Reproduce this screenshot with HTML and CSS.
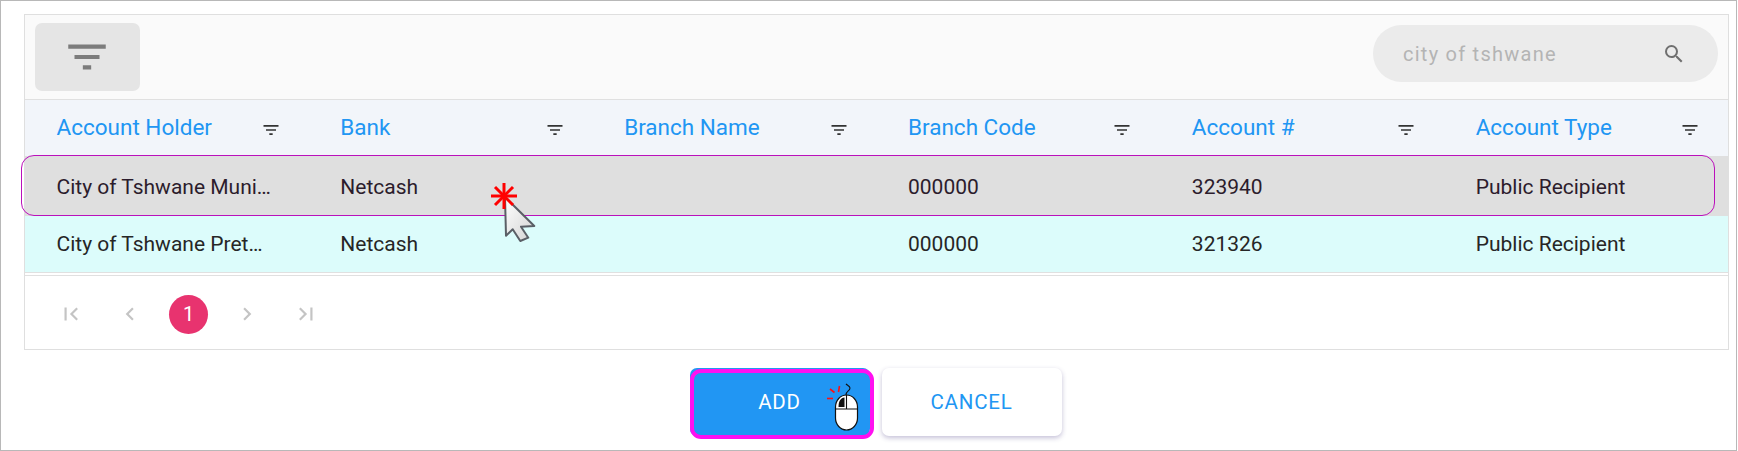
FILE: index.html
```html
<!DOCTYPE html>
<html lang="en">
<head>
<meta charset="utf-8">
<title>Recipients</title>
<link rel="stylesheet" href="styles.css">
</head>
<body>
<div class="frame">
  <section class="panel">
    <div class="toolbar">
      <button class="filter-btn" type="button" aria-label="Filter">
        <svg class="filter-big" viewBox="0 0 24 24"><path d="M10 18h4v-2h-4v2zM3 6v2h18V6H3zm3 7h12v-2H6v2z"/></svg>
      </button>
      <div class="search">
        <span class="search-text">city of tshwane</span>
        <svg class="search-icon" viewBox="0 0 24 24"><path d="M15.5 14h-.79l-.28-.27A6.47 6.47 0 0 0 16 9.5 6.5 6.5 0 1 0 9.5 16c1.61 0 3.09-.59 4.23-1.57l.27.28v.79l5 4.99L20.49 19l-4.99-5zm-6 0C7.01 14 5 11.99 5 9.5S7.01 5 9.5 5 14 7.01 14 9.5 11.99 14 9.5 14z"/></svg>
      </div>
    </div>
    <div class="row head">
      <div class="cell"><span>Account Holder</span><svg class="col-filter" viewBox="0 0 24 24"><path d="M10 18h4v-2h-4v2zM3 6v2h18V6H3zm3 7h12v-2H6v2z"/></svg></div>
      <div class="cell"><span>Bank</span><svg class="col-filter" viewBox="0 0 24 24"><path d="M10 18h4v-2h-4v2zM3 6v2h18V6H3zm3 7h12v-2H6v2z"/></svg></div>
      <div class="cell"><span>Branch Name</span><svg class="col-filter" viewBox="0 0 24 24"><path d="M10 18h4v-2h-4v2zM3 6v2h18V6H3zm3 7h12v-2H6v2z"/></svg></div>
      <div class="cell"><span>Branch Code</span><svg class="col-filter" viewBox="0 0 24 24"><path d="M10 18h4v-2h-4v2zM3 6v2h18V6H3zm3 7h12v-2H6v2z"/></svg></div>
      <div class="cell"><span>Account #</span><svg class="col-filter" viewBox="0 0 24 24"><path d="M10 18h4v-2h-4v2zM3 6v2h18V6H3zm3 7h12v-2H6v2z"/></svg></div>
      <div class="cell"><span>Account Type</span><svg class="col-filter" viewBox="0 0 24 24"><path d="M10 18h4v-2h-4v2zM3 6v2h18V6H3zm3 7h12v-2H6v2z"/></svg></div>
    </div>
    <div class="row selected">
      <div class="cell">City of Tshwane Muni…</div>
      <div class="cell">Netcash</div>
      <div class="cell"></div>
      <div class="cell">000000</div>
      <div class="cell">323940</div>
      <div class="cell">Public Recipient</div>
    </div>
    <div class="row alt">
      <div class="cell">City of Tshwane Pret…</div>
      <div class="cell">Netcash</div>
      <div class="cell"></div>
      <div class="cell">000000</div>
      <div class="cell">321326</div>
      <div class="cell">Public Recipient</div>
    </div>
    <div class="pager">
      <svg class="pg-icon" viewBox="0 0 24 24"><path d="M18.41 16.59 13.82 12l4.59-4.59L17 6l-6 6 6 6zM6 6h2v12H6z"/></svg>
      <svg class="pg-icon" viewBox="0 0 24 24"><path d="M15.41 7.41 14 6l-6 6 6 6 1.41-1.41L10.83 12z"/></svg>
      <span class="pg-current">1</span>
      <svg class="pg-icon" viewBox="0 0 24 24"><path d="M10 6 8.59 7.41 13.17 12l-4.58 4.59L10 18l6-6z"/></svg>
      <svg class="pg-icon" viewBox="0 0 24 24"><path d="M5.59 7.41 10.18 12l-4.59 4.59L7 18l6-6-6-6zM16 6h2v12h-2z"/></svg>
    </div>
  </section>
  <div class="actions">
    <button class="btn btn-add" type="button">ADD</button>
    <button class="btn btn-cancel" type="button">CANCEL</button>
  </div>

  <div class="row-highlight"></div>
  <div class="add-highlight"></div>
  <svg class="pointer" viewBox="0 0 60 70">
    <defs>
      <linearGradient id="arrowFill" x1="0" y1="0" x2="1" y2="1">
        <stop offset="0" stop-color="#ffffff"/>
        <stop offset="1" stop-color="#d2d2d2"/>
      </linearGradient>
    </defs>
    <path d="M16 16 17 54.700 23.700 48.300 31.300 60 39.300 56.700 32 45.700 45.300 45Z" fill="url(#arrowFill)" stroke="#5a5f66" stroke-width="2" stroke-linejoin="round"/>
    <g stroke="#ff0000" stroke-width="3" stroke-linecap="butt">
      <path d="M15 2V28"/>
      <path d="M2 15H28"/>
      <path d="M6 6 24 24"/>
      <path d="M24 6 6 24"/>
    </g>
  </svg>
  <svg class="mouse" viewBox="0 0 40 50">
    <g stroke="#ff1010" stroke-width="1.600" fill="none">
      <path d="M2 17.500H8"/>
      <path d="M5 8 9.500 11.500"/>
      <path d="M14.500 5 13.500 11"/>
    </g>
    <path d="M21 14C21 10 25 10 25 7 25 5 22 4 21 3" stroke="#111" stroke-width="1.100" fill="none"/>
    <rect x="10.500" y="14" width="22" height="35" rx="11" ry="12" fill="#fff" stroke="#111" stroke-width="1.200"/>
    <path d="M10.500 28H32.500M21.500 14V28" stroke="#111" stroke-width="1.100" fill="none"/>
    <path d="M19.500 16.500C15.500 17 13.500 20 13.500 26H19.500Z" fill="#111"/>
  </svg>
</div>
</body>
</html>
```
FILE: styles.css
```css
* { box-sizing: border-box; }
html, body { margin: 0; padding: 0; }
body { font-family: Roboto, "Liberation Sans", sans-serif; background: #fff; }

.frame {
  position: relative;
  width: 1737px;
  height: 451px;
  border: 1px solid #b8b8b8;
  padding: 13px 7px 0 23px;
  overflow: hidden;
}

.panel {
  border: 1px solid #dfdfdf;
  height: 336px;
  display: flex;
  flex-direction: column;
}

.toolbar {
  height: 85px;
  flex: none;
  background: #fafafa;
  border-bottom: 1px solid #e0e0e0;
  display: flex;
  justify-content: space-between;
  padding: 8px 10px 0 10px;
}

.filter-btn {
  width: 105px;
  height: 68px;
  border: 0;
  border-radius: 7px;
  background: #e5e5e5;
  padding: 0 2px 0 0;
  display: flex;
  align-items: center;
  justify-content: center;
}
.filter-big { width: 50px; height: 50px; fill: #7c7c7c; }

.search {
  width: 345px;
  height: 57px;
  margin-top: 2px;
  border-radius: 29px;
  background: #ebebeb;
  display: flex;
  align-items: center;
  justify-content: space-between;
  padding: 0 32px 0 30px;
}
.search-text { font-size: 20px; letter-spacing: 1.250px; color: #b4b4b4; }
.search-icon { width: 24px; height: 24px; fill: #6f6f6f; }

.row {
  display: grid;
  grid-template-columns: repeat(6, 1fr);
  flex: none;
}
.cell {
  padding: 0 28px 0 31.500px;
  display: flex;
  align-items: center;
  justify-content: space-between;
  min-width: 0;
  font-size: 21px;
  white-space: nowrap;
}
.head { height: 56px; background: #f2f5fa; color: #2196f3; }
.head .cell { font-size: 22.500px; padding-bottom: 3px; }
.col-filter { width: 20px; height: 20px; fill: #333; margin-top: 7px; flex: none; }

.selected { height: 60px; padding-top: 1px; background: #dfdfdf; color: #2c1c2c; }
.alt { height: 57px; background: #dcfcfb; color: #262626; border-bottom: 1px solid #e0e0e0; }

.pager {
  flex: 1;
  margin-top: 2px;
  border-top: 1px solid #e0e0e0;
  display: flex;
  align-items: center;
  padding: 3px 0 0 26px;
  gap: 19px;
}
.pg-icon { width: 40px; height: 26px; fill: #c4c4c4; flex: none; }
.pg-current {
  width: 39px;
  height: 39px;
  border-radius: 50%;
  background: #e8336f;
  color: #fff;
  font-size: 20px;
  display: flex;
  align-items: center;
  justify-content: center;
  flex: none;
}

.actions {
  display: flex;
  justify-content: center;
  gap: 12px;
  margin-top: 18px;
  padding-right: 2px;
}
.btn {
  width: 180px;
  height: 68px;
  border: 0;
  border-radius: 7px;
  font-family: inherit;
  font-size: 20.500px;
  letter-spacing: 0.800px;
  padding: 0;
}
.btn-add { background: #2196f3; color: #fff; }
.btn-cancel {
  background: #fff;
  color: #2196f3;
  box-shadow: 0 2px 5px rgba(70, 60, 130, 0.32);
}

.row-highlight {
  position: absolute;
  left: 20px;
  top: 154px;
  width: 1694px;
  height: 61px;
  border: 1.300px solid #bb10bb;
  border-radius: 13px;
}
.add-highlight {
  position: absolute;
  left: 689px;
  top: 368px;
  width: 184px;
  height: 70px;
  border: 4px solid #ff10f0;
  border-radius: 11px;
}
.pointer {
  position: absolute;
  left: 488px;
  top: 180px;
  width: 60px;
  height: 70px;
}
.mouse {
  position: absolute;
  left: 824px;
  top: 380px;
  width: 40px;
  height: 50px;
}
```
